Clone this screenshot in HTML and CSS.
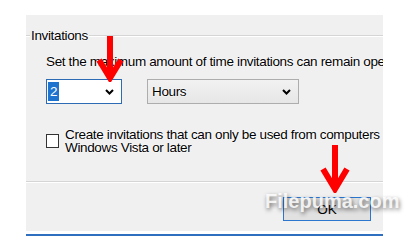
FILE: index.html
```
<!DOCTYPE html>
<html>
<head>
    <title>Invitations</title>
    <link rel="stylesheet" href="styles.css">
</head>
<body>
    <div class="dialog">
        <div class="group-title">
            <span class="rule short"></span>
            <span class="label">Invitations</span>
            <span class="rule"></span>
        </div>

        <p class="desc">Set the maximum amount of time invitations can remain open</p>

        <div class="combo-row">
            <div class="combo focused">
                <span class="selected">2</span>
                <svg class="chev" width="9" height="6" viewBox="0 0 9 6"><polyline points="1,1 4.5,4.5 8,1" fill="none" stroke="#000" stroke-width="2"/></svg>
            </div>
            <div class="combo wide">
                <span>Hours</span>
                <svg class="chev" width="9" height="6" viewBox="0 0 9 6"><polyline points="1,1 4.5,4.5 8,1" fill="none" stroke="#000" stroke-width="2"/></svg>
            </div>
        </div>

        <div class="check-row">
            <span class="box"></span>
            <span class="check-text">Create invitations that can only be used from computers<br>Windows Vista or later</span>
        </div>

        <div class="separator"></div>

        <div class="button-row">
            <button class="ok">OK</button>
        </div>

        <!-- red arrows pasted over the screenshot -->
        <svg class="arrow arrow-combo" width="30" height="46" viewBox="0 0 30 46">
            <line x1="15" y1="0" x2="15" y2="40" stroke="#f00" stroke-width="6"/>
            <polyline points="4,24 15,42 26,24" fill="none" stroke="#f00" stroke-width="6"/>
        </svg>
        <svg class="arrow arrow-ok" width="30" height="48" viewBox="0 0 30 48">
            <line x1="15" y1="0" x2="15" y2="42" stroke="#f00" stroke-width="6"/>
            <polyline points="3,24 15,44 27,24" fill="none" stroke="#f00" stroke-width="6"/>
        </svg>
    </div>
    <div class="blue-line"></div>

    <div class="watermark">Filepuma.com</div>
</body>
</html>
```

FILE: styles.css
```
body {
    position: relative;
    margin: 0;
    padding-top: 15px;
    background: #fff;
    font-family: "Liberation Sans", sans-serif;
    font-size: 13.5px;
    letter-spacing: -0.35px;
    color: #000;
}
.dialog {
    position: relative;
    margin-left: 26px;
    width: 357px;
    height: 216px;
    background: #f0f0f0;
}
.dialog span, .dialog p {
    text-shadow: 0 0 1px #fff, 0 0 2px #fff, 0 0 2px #fff;
}
.group-title {
    display: flex;
    align-items: center;
    padding-top: 13px;
    height: 16px;
}
.rule {
    flex: 1;
    height: 1px;
    background: #d5d5d5;
    border-bottom: 1px solid #fff;
}
.rule.short {
    flex: 0 0 4px;
}
.label {
    padding: 0 1px;
    line-height: 16px;
}
.desc {
    margin: 10px 0 0 20px;
    line-height: 16px;
    white-space: nowrap;
    overflow: hidden;
}
.combo-row {
    display: flex;
    gap: 25px;
    margin: 9px 0 0 20px;
}
.combo {
    display: flex;
    align-items: center;
    justify-content: space-between;
    box-sizing: border-box;
    width: 76px;
    height: 25px;
    padding: 0 7px 0 4px;
    border: 1px solid #adadad;
    background: linear-gradient(#f2f2f2, #e6e6e6);
}
.combo.focused {
    padding-left: 1px;
    border-color: #2e6bb5;
    background: #fff;
}
.combo.wide {
    width: 152px;
}
.selected {
    background: #1e73cf;
    color: #fff;
    padding: 0 2px;
    line-height: 19px;
    text-shadow: none !important;
}
.chev {
    display: block;
}
.check-row {
    display: flex;
    align-items: flex-start;
    margin: 24px 0 0 20px;
    overflow: hidden;
}
.box {
    flex: 0 0 auto;
    box-sizing: border-box;
    width: 13px;
    height: 14px;
    margin-top: 6px;
    border: 1px solid #333;
    background: #fff;
}
.check-text {
    margin-left: 6px;
    line-height: 13px;
    white-space: nowrap;
}
.separator {
    margin-top: 27px;
    height: 1px;
    background: #d5d5d5;
    border-bottom: 1px solid #fff;
}
.button-row {
    display: flex;
    justify-content: flex-end;
    padding: 14px 12px 0 0;
}
.ok {
    width: 88px;
    height: 24px;
    border: 1px solid #2b77d0;
    background: #e1e1e1;
    font-family: "Liberation Sans", sans-serif;
    font-size: 13.5px;
    color: #000;
}
.arrow {
    position: absolute;
}
.arrow-combo {
    left: 69px;
    top: 21px;
}
.arrow-ok {
    left: 294px;
    top: 130px;
}
.watermark {
    position: absolute;
    left: 265px;
    top: 190px;
    font-size: 20px;
    font-weight: bold;
    letter-spacing: 0;
    color: rgba(255, 255, 255, 0.85);
    text-shadow: 1px 2px 4px rgba(0, 0, 0, 0.55);
    white-space: nowrap;
}
.blue-line {
    margin: 3px 0 0 26px;
    width: 357px;
    height: 2px;
    background: #2f6fc0;
}
```
